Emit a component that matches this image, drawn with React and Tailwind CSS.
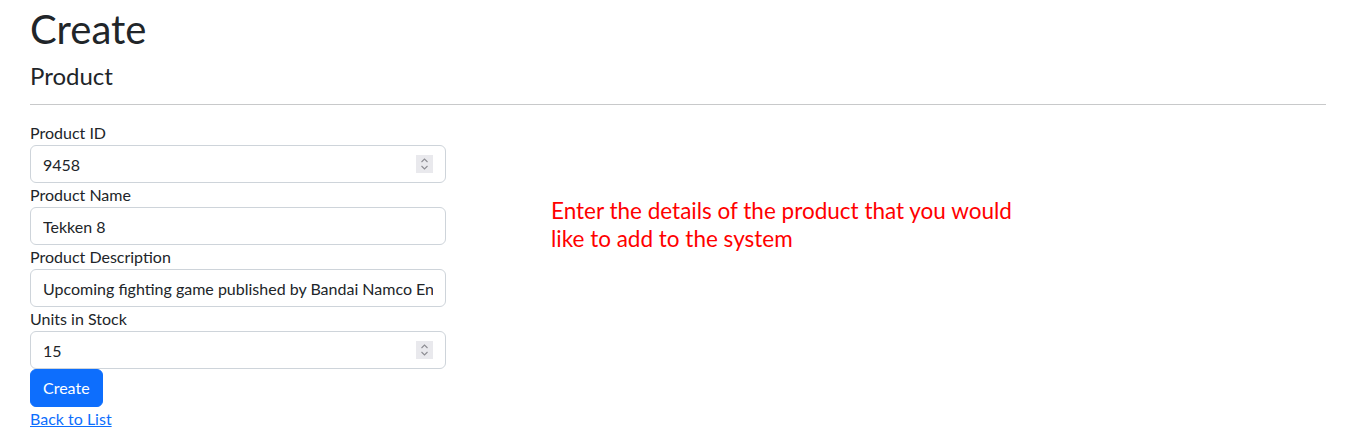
import React from 'react';

const font = { fontFamily: 'Lato, "Open Sans", sans-serif' };

function Spinner() {
    return (
        <span className="absolute right-[13px] top-[10px] w-[17px] h-[18px] bg-[#e9e9ed] flex items-center justify-center">
            <svg width="9" height="14" viewBox="0 0 9 14" fill="none" stroke="#8d8d93" strokeWidth="1.1">
                <path d="M1.5 5 L4.5 2 L7.5 5" />
                <path d="M1.5 9 L4.5 12 L7.5 9" />
            </svg>
        </span>
    );
}

function Field({ label, value, number }) {
    return (
        <div>
            <label className="block text-base leading-6 text-[#212529]">{label}</label>
            <div className="relative">
                <input
                    type="text"
                    readOnly
                    value={value}
                    className="block w-full h-[38px] border border-[#ced4da] rounded-[6px] pl-3 pr-3 text-base leading-6 text-[#212529] bg-white outline-none"
                    style={font}
                />
                {number && <Spinner />}
            </div>
        </div>
    );
}

export default function App() {
    return (
        <div className="bg-white min-h-screen pl-[30px] pr-[32px] pt-[5px] text-[#212529]" style={font}>
            <h1 className="text-[40px] leading-[48px] mb-2">Create</h1>
            <h4 className="text-[24px] leading-[29px]">Product</h4>
            <hr className="mt-[14px] mb-4 border-0 border-t border-[#c8c9ca]" />

            <div className="flex">
                {/* Form column */}
                <div className="w-[416px] shrink-0">
                    <Field label="Product ID" value="9458" number />
                    <Field label="Product Name" value="Tekken 8" />
                    <Field
                        label="Product Description"
                        value="Upcoming fighting game published by Bandai Namco Entertainment"
                    />
                    <Field label="Units in Stock" value="15" number />
                    <button className="block h-[38px] px-3 rounded-[6px] bg-[#0d6efd] text-white text-base leading-6 border border-[#0d6efd]">
                        Create
                    </button>
                    <a href="#" className="text-[#0d6efd] underline text-base leading-6">
                        Back to List
                    </a>
                </div>

                {/* Hint text */}
                <p className="ml-[105px] mt-[76px] w-[480px] text-[22.5px] leading-[28px] text-[#ff0000]">
                    Enter the details of the product that you would like to add to the system
                </p>
            </div>
        </div>
    );
}
